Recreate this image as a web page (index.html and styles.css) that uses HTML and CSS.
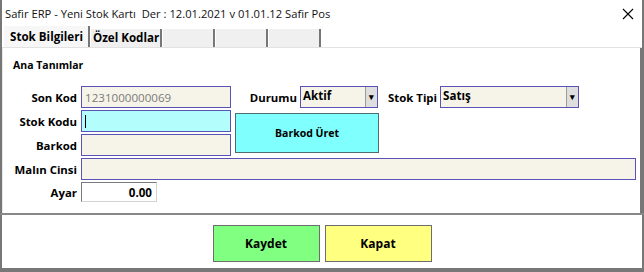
FILE: index.html
```html
<!DOCTYPE html>
<html>

<head>
  <title>Safir ERP - Yeni Stok Kartı</title>
  <meta name="viewport" content="initial-scale=1.0">
  <link rel="stylesheet" href="styles.css">
</head>

<body>
  <div class="window">
    <div class="titlebar">
      <span class="title">Safir ERP - Yeni Stok Kartı&nbsp; Der : 12.01.2021 v 01.01.12 Safir Pos</span>
      <svg class="close" width="12" height="12" viewBox="0 0 12 12">
        <path d="M1 1 L11 11 M11 1 L1 11" stroke="#000" stroke-width="1.1" fill="none" />
      </svg>
    </div>

    <div class="tabs">
      <div class="tab active">Stok Bilgileri</div>
      <div class="tab">Özel Kodlar</div>
      <div class="tab empty"></div>
      <div class="tab empty"></div>
      <div class="tab empty"></div>
    </div>

    <div class="panel">
      <div class="group-title">Ana Tanımlar</div>
      <div class="form">
        <label class="lbl r1">Son Kod</label>
        <div class="field r1 readonly">1231000000069</div>

        <div class="inline r1 c3">
          <label class="lbl">Durumu</label>
          <div class="combo combo-durum"><span>Aktif</span><i class="arrow">&#9662;</i></div>
        </div>
        <div class="inline r1 c4">
          <label class="lbl">Stok Tipi</label>
          <div class="combo combo-tip"><span>Satış</span><i class="arrow">&#9662;</i></div>
        </div>

        <label class="lbl r2">Stok Kodu</label>
        <div class="field r2 focus"><span class="caret"></span></div>
        <button class="btn-barkod" type="button">Barkod Üret</button>

        <label class="lbl r3">Barkod</label>
        <div class="field r3"></div>

        <label class="lbl r4">Malın Cinsi</label>
        <div class="field r4 wide"></div>

        <label class="lbl r5">Ayar</label>
        <div class="field r5 num">0.00</div>
      </div>
    </div>

    <div class="footer">
      <button class="btn btn-save" type="button">Kaydet</button>
      <button class="btn btn-close" type="button">Kapat</button>
    </div>
  </div>
</body>

</html>
```

FILE: styles.css
```css
* {
  box-sizing: border-box;
}

body {
  margin: 0;
  background-color: white;
  font-family: "Open Sans", "Noto Sans", Arial, sans-serif;
}

.window {
  width: 644px;
  height: 272px;
  display: flex;
  flex-direction: column;
  border: 2px solid #777;
  border-top: none;
  background-color: white;
}

.titlebar {
  height: 27px;
  display: flex;
  align-items: center;
  justify-content: space-between;
  padding: 0 8px 0 3px;
  font-size: 11.2px;
  color: #111;
}

.close {
  margin-top: 1px;
}

/* tab strip */
.tabs {
  height: 21px;
  display: flex;
  align-items: flex-end;
  padding-left: 1px;
  border-bottom: 1px solid #e2e2e2;
}

.tab {
  height: 18px;
  background-color: #f0f0f0;
  border-left: 1px solid #fff;
  border-right: 2px solid #777;
  font-size: 11.6px;
  font-weight: bold;
  padding: 0 1px 0 2px;
  line-height: 18px;
  color: #000;
}

.tab.active {
  height: 21px;
  background-color: #f7f7f7;
  padding: 0 5px 0 6px;
  line-height: 21px;
}

.tab.empty {
  width: 53px;
}

/* main panel */
.panel {
  height: 165px;
  border-left: 1px solid #e8e8e8;
  border-right: 2px solid #777;
  padding: 10px 0 0 8px;
}

.group-title {
  font-size: 10.5px;
  font-weight: bold;
  height: 18px;
  margin-left: 2px;
}

.form {
  margin-top: 10px;
  display: grid;
  grid-template-columns: 66px 150px 144px 256px;
  grid-template-rows: 22px 22px 22px 22px 21px;
  column-gap: 4px;
  row-gap: 2px;
}

.r1 { grid-row: 1; }
.r2 { grid-row: 2; }
.r3 { grid-row: 3; }
.r4 { grid-row: 4; }
.r5 { grid-row: 5; }

.lbl {
  grid-column: 1;
  font-size: 11.4px;
  font-weight: bold;
  text-align: right;
  align-self: center;
  white-space: nowrap;
}

.field {
  grid-column: 2;
  border: 1px solid #5b52b8;
  background-color: #f6f4e9;
  font-size: 11.6px;
  padding: 2px 3px;
  display: flex;
  align-items: center;
}

.field.readonly {
  color: #7a7a7a;
}

.field.focus {
  background-color: #b3fdfd;
}

.caret {
  width: 1px;
  height: 13px;
  background-color: #000;
}

.field.wide {
  grid-column: 2 / 5;
  margin-right: 3px;
}

.field.num {
  width: 76px;
  height: 20px;
  justify-content: flex-end;
  font-weight: bold;
  background-color: #fff;
  border-color: #7a7a7a #d4d4d4 #d4d4d4 #7a7a7a;
  padding-right: 4px;
}

.inline {
  display: flex;
  align-items: center;
  gap: 3px;
}

.c3 {
  grid-column: 3;
  justify-content: flex-end;
  margin-right: 1px;
}

.c4 {
  grid-column: 4;
  padding-left: 5px;
}

.combo {
  height: 22px;
  border: 1px solid #5b52b8;
  background-color: #f6f4e9;
  display: flex;
  align-items: stretch;
  font-size: 11.6px;
  font-weight: bold;
}

.combo span {
  flex: 1;
  padding: 1px 2px;
}

.combo-durum {
  width: 78px;
}

.combo-tip {
  width: 139px;
}

.arrow {
  width: 12px;
  background-color: #dedede;
  border-left: 1px solid #9c9c9c;
  font-style: normal;
  font-size: 9px;
  text-align: center;
  line-height: 20px;
}

.btn-barkod {
  grid-column: 3;
  grid-row: 2 / 4;
  align-self: center;
  height: 40px;
  margin: 0;
  background-color: #80ffff;
  border: 1px solid #4f6d6d;
  font-family: inherit;
  font-size: 10.5px;
  font-weight: bold;
}

/* bottom buttons */
.footer {
  flex: 1;
  display: flex;
  justify-content: center;
  align-items: center;
  gap: 5px;
  border-top: 2px solid #888;
  border-bottom: 2px solid #777;
  margin: 0 -2px;
  padding-top: 3px;
}

.btn {
  width: 107px;
  height: 37px;
  font-family: inherit;
  font-size: 12px;
  font-weight: bold;
  border: 1px solid #6d6d6d;
}

.btn-save {
  background-color: #80ff80;
}

.btn-close {
  background-color: #ffff80;
}
```
